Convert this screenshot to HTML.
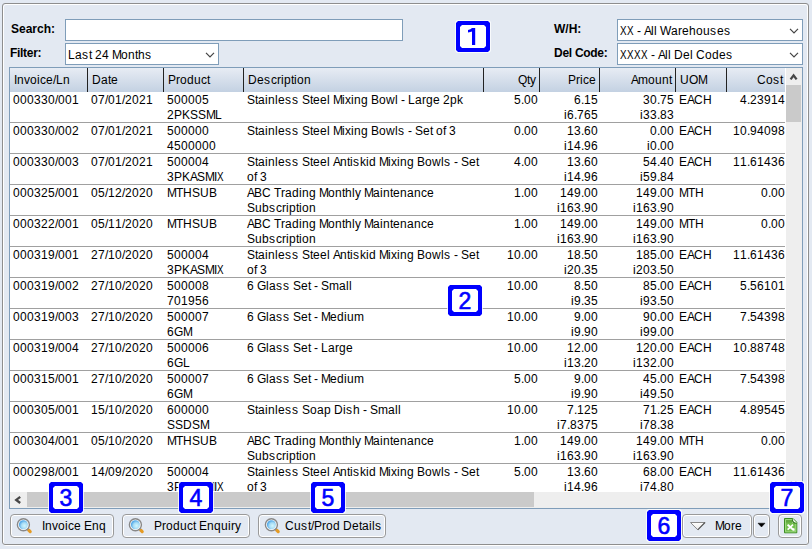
<!DOCTYPE html><html><head><meta charset="utf-8"><style>
*{margin:0;padding:0;box-sizing:border-box}
html,body{width:812px;height:549px;overflow:hidden;background:#e3e9f2;font-family:"Liberation Sans",sans-serif;font-size:12px;color:#000}
.a{position:absolute}
.t,.b{position:absolute;white-space:nowrap;line-height:15px}
.b{font-weight:bold}
.t i{display:inline-block;font-style:normal;white-space:pre}
.t i.X{transform:scaleX(0.82);transform-origin:0 0}
.w2{width:2px}.w3{width:3px}.w4{width:4px}.w5{width:5px}.w6{width:6px}.w7{width:7px}.w8{width:8px}.w9{width:9px}.w10{width:10px}.w11{width:11px}.w12{width:12px}
.inp{position:absolute;background:#fff;border:1px solid #7f9db9}
.chev{position:absolute;width:7px;height:7px;border-right:1px solid #444;border-bottom:1px solid #444;transform:rotate(45deg)}
.bo{position:absolute;width:36px;height:33px;background:rgba(255,255,255,0.75);clip-path:polygon(2px 0,34px 0,36px 2px,36px 31px,34px 33px,2px 33px,0 31px,0 2px)}
.badge{position:absolute;width:34px;height:31px;background:#00f;clip-path:polygon(2px 0,32px 0,34px 2px,34px 29px,32px 31px,2px 31px,0 29px,0 2px)}
.badge i{position:absolute;left:4px;top:4px;right:4px;bottom:4px;background:#fff;font-style:normal;color:#00f;font-weight:normal;-webkit-text-stroke:0.6px #00f;font-size:23px;line-height:25px;text-align:center;clip-path:polygon(2px 0,calc(100% - 2px) 0,100% 2px,100% calc(100% - 2px),calc(100% - 2px) 100%,2px 100%,0 calc(100% - 2px),0 2px)}
.btn{position:absolute;border:1px solid #9a9a9a;border-radius:4px;box-shadow:inset 0 0 0 1px #fff;background:#e3e9f2}
.hline{position:absolute;height:1px;background:#a0a0a0}
</style></head><body>

<div class="a" style="left:3px;top:4px;width:805px;height:542px;border:1px solid #fff;border-radius:3px"></div>
<div class="a" style="left:2px;top:3px;width:807px;height:542px;border:1px solid #8e8e8e;border-radius:3px"></div>
<div class="b" style="left:11px;top:22px">Search:</div>
<div class="inp" style="left:65px;top:19px;width:338px;height:22px"></div>
<div class="b" style="left:10px;top:46px;letter-spacing:-0.300px">Filter:</div>
<div class="inp" style="left:65px;top:43px;width:154px;height:22px"></div>
<div class="t" style="left:68px;top:48px"><i class="w7">L</i><i class="w7">a</i><i class="w7">s</i><i class="w3">t</i><i class="w3"> </i><i class="w7">2</i><i class="w7">4</i><i class="w3"> </i><i class="w9">M</i><i class="w7">o</i><i class="w7">n</i><i class="w3">t</i><i class="w7">h</i><i class="w7">s</i></div>
<svg class="a" style="left:205px;top:52px" width="10" height="6"><path d="M1 0.8 L5 4.8 L9 0.8" fill="none" stroke="#444" stroke-width="1.2"/></svg>
<div class="b" style="left:554px;top:22px">W/H:</div>
<div class="inp" style="left:617px;top:19px;width:186px;height:22px"></div>
<div class="t" style="left:620px;top:24px"><i class="w7 X">X</i><i class="w7 X">X</i><i class="w3"> </i><i class="w4">-</i><i class="w3"> </i><i class="w7">A</i><i class="w3">l</i><i class="w3">l</i><i class="w3"> </i><i class="w11">W</i><i class="w7">a</i><i class="w4">r</i><i class="w7">e</i><i class="w7">h</i><i class="w7">o</i><i class="w7">u</i><i class="w7">s</i><i class="w7">e</i><i class="w7">s</i></div>
<svg class="a" style="left:789px;top:28px" width="10" height="6"><path d="M1 0.8 L5 4.8 L9 0.8" fill="none" stroke="#444" stroke-width="1.2"/></svg>
<div class="b" style="left:554px;top:46px;letter-spacing:-0.280px">Del Code:</div>
<div class="inp" style="left:617px;top:43px;width:186px;height:22px"></div>
<div class="t" style="left:620px;top:48px"><i class="w7 X">X</i><i class="w7 X">X</i><i class="w7 X">X</i><i class="w7 X">X</i><i class="w3"> </i><i class="w4">-</i><i class="w3"> </i><i class="w7">A</i><i class="w3">l</i><i class="w3">l</i><i class="w3"> </i><i class="w9">D</i><i class="w7">e</i><i class="w3">l</i><i class="w3"> </i><i class="w9">C</i><i class="w7">o</i><i class="w7">d</i><i class="w7">e</i><i class="w7">s</i></div>
<svg class="a" style="left:789px;top:52px" width="10" height="6"><path d="M1 0.8 L5 4.8 L9 0.8" fill="none" stroke="#444" stroke-width="1.2"/></svg>
<div class="a" style="left:9px;top:67px;width:794px;height:442px;border:1px solid #7f9db9;background:#fff"></div>
<div class="a" style="left:10px;top:68px;width:775px;height:24px;background:linear-gradient(#e7ecf4,#c3d1e2)"></div>
<div class="t" style="left:14px;top:73px"><i class="w3">I</i><i class="w7">n</i><i class="w6">v</i><i class="w7">o</i><i class="w3">i</i><i class="w6">c</i><i class="w7">e</i><i class="w3">/</i><i class="w7">L</i><i class="w7">n</i></div>
<div class="a" style="left:87px;top:68px;width:1px;height:24px;background:#222"></div>
<div class="t" style="left:92px;top:73px"><i class="w9">D</i><i class="w7">a</i><i class="w3">t</i><i class="w7">e</i></div>
<div class="a" style="left:163px;top:68px;width:1px;height:24px;background:#222"></div>
<div class="t" style="left:168px;top:73px"><i class="w8">P</i><i class="w4">r</i><i class="w7">o</i><i class="w7">d</i><i class="w7">u</i><i class="w6">c</i><i class="w3">t</i></div>
<div class="a" style="left:243px;top:68px;width:1px;height:24px;background:#222"></div>
<div class="t" style="left:248px;top:73px"><i class="w9">D</i><i class="w7">e</i><i class="w7">s</i><i class="w6">c</i><i class="w4">r</i><i class="w3">i</i><i class="w7">p</i><i class="w3">t</i><i class="w3">i</i><i class="w7">o</i><i class="w7">n</i></div>
<div class="a" style="left:483px;top:68px;width:1px;height:24px;background:#222"></div>
<div class="t" style="left:518px;top:73px"><i class="w9">Q</i><i class="w3">t</i><i class="w6">y</i></div>
<div class="a" style="left:539px;top:68px;width:1px;height:24px;background:#222"></div>
<div class="t" style="left:568px;top:73px"><i class="w8">P</i><i class="w4">r</i><i class="w3">i</i><i class="w6">c</i><i class="w7">e</i></div>
<div class="a" style="left:599px;top:68px;width:1px;height:24px;background:#222"></div>
<div class="t" style="left:631px;top:73px"><i class="w7">A</i><i class="w10">m</i><i class="w7">o</i><i class="w7">u</i><i class="w7">n</i><i class="w3">t</i></div>
<div class="a" style="left:675px;top:68px;width:1px;height:24px;background:#222"></div>
<div class="t" style="left:680px;top:73px"><i class="w9">U</i><i class="w9">O</i><i class="w9">M</i></div>
<div class="a" style="left:726px;top:68px;width:1px;height:24px;background:#222"></div>
<div class="t" style="left:757px;top:73px"><i class="w9">C</i><i class="w7">o</i><i class="w7">s</i><i class="w3">t</i></div>
<div class="t" style="left:13px;top:93px"><i class="w7">0</i><i class="w7">0</i><i class="w7">0</i><i class="w7">3</i><i class="w7">3</i><i class="w7">0</i><i class="w3">/</i><i class="w7">0</i><i class="w7">0</i><i class="w7">1</i></div>
<div class="t" style="left:91px;top:93px"><i class="w7">0</i><i class="w7">7</i><i class="w3">/</i><i class="w7">0</i><i class="w7">1</i><i class="w3">/</i><i class="w7">2</i><i class="w7">0</i><i class="w7">2</i><i class="w7">1</i></div>
<div class="t" style="left:167px;top:93px"><i class="w7">5</i><i class="w7">0</i><i class="w7">0</i><i class="w7">0</i><i class="w7">0</i><i class="w7">5</i></div>
<div class="t" style="left:167px;top:108px"><i class="w7">2</i><i class="w8">P</i><i class="w8">K</i><i class="w8">S</i><i class="w8">S</i><i class="w9">M</i><i class="w7">L</i></div>
<div class="t" style="left:247px;top:93px"><i class="w8">S</i><i class="w3">t</i><i class="w7">a</i><i class="w3">i</i><i class="w7">n</i><i class="w3">l</i><i class="w7">e</i><i class="w7">s</i><i class="w7">s</i><i class="w3"> </i><i class="w8">S</i><i class="w3">t</i><i class="w7">e</i><i class="w7">e</i><i class="w3">l</i><i class="w3"> </i><i class="w9">M</i><i class="w3">i</i><i class="w6">x</i><i class="w3">i</i><i class="w7">n</i><i class="w7">g</i><i class="w3"> </i><i class="w8">B</i><i class="w7">o</i><i class="w9">w</i><i class="w3">l</i><i class="w3"> </i><i class="w4">-</i><i class="w3"> </i><i class="w7">L</i><i class="w7">a</i><i class="w4">r</i><i class="w7">g</i><i class="w7">e</i><i class="w3"> </i><i class="w7">2</i><i class="w7">p</i><i class="w6">k</i></div>
<div class="t" style="left:514px;top:93px"><i class="w7">5</i><i class="w3">.</i><i class="w7">0</i><i class="w7">0</i></div>
<div class="t" style="left:574px;top:93px"><i class="w7">6</i><i class="w3">.</i><i class="w7">1</i><i class="w7">5</i></div>
<div class="t" style="left:564px;top:108px"><i class="w3">i</i><i class="w7">6</i><i class="w3">.</i><i class="w7">7</i><i class="w7">6</i><i class="w7">5</i></div>
<div class="t" style="left:643px;top:93px"><i class="w7">3</i><i class="w7">0</i><i class="w3">.</i><i class="w7">7</i><i class="w7">5</i></div>
<div class="t" style="left:640px;top:108px"><i class="w3">i</i><i class="w7">3</i><i class="w7">3</i><i class="w3">.</i><i class="w7">8</i><i class="w7">3</i></div>
<div class="t" style="left:679px;top:93px"><i class="w8">E</i><i class="w7">A</i><i class="w9">C</i><i class="w9">H</i></div>
<div class="t" style="left:740px;top:93px"><i class="w7">4</i><i class="w3">.</i><i class="w7">2</i><i class="w7">3</i><i class="w7">9</i><i class="w7">1</i><i class="w7">4</i></div>
<div class="hline" style="left:10px;top:122px;width:775px"></div>
<div class="t" style="left:13px;top:124px"><i class="w7">0</i><i class="w7">0</i><i class="w7">0</i><i class="w7">3</i><i class="w7">3</i><i class="w7">0</i><i class="w3">/</i><i class="w7">0</i><i class="w7">0</i><i class="w7">2</i></div>
<div class="t" style="left:91px;top:124px"><i class="w7">0</i><i class="w7">7</i><i class="w3">/</i><i class="w7">0</i><i class="w7">1</i><i class="w3">/</i><i class="w7">2</i><i class="w7">0</i><i class="w7">2</i><i class="w7">1</i></div>
<div class="t" style="left:167px;top:124px"><i class="w7">5</i><i class="w7">0</i><i class="w7">0</i><i class="w7">0</i><i class="w7">0</i><i class="w7">0</i></div>
<div class="t" style="left:167px;top:139px"><i class="w7">4</i><i class="w7">5</i><i class="w7">0</i><i class="w7">0</i><i class="w7">0</i><i class="w7">0</i><i class="w7">0</i></div>
<div class="t" style="left:247px;top:124px"><i class="w8">S</i><i class="w3">t</i><i class="w7">a</i><i class="w3">i</i><i class="w7">n</i><i class="w3">l</i><i class="w7">e</i><i class="w7">s</i><i class="w7">s</i><i class="w3"> </i><i class="w8">S</i><i class="w3">t</i><i class="w7">e</i><i class="w7">e</i><i class="w3">l</i><i class="w3"> </i><i class="w9">M</i><i class="w3">i</i><i class="w6">x</i><i class="w3">i</i><i class="w7">n</i><i class="w7">g</i><i class="w3"> </i><i class="w8">B</i><i class="w7">o</i><i class="w9">w</i><i class="w3">l</i><i class="w7">s</i><i class="w3"> </i><i class="w4">-</i><i class="w3"> </i><i class="w8">S</i><i class="w7">e</i><i class="w3">t</i><i class="w3"> </i><i class="w7">o</i><i class="w3">f</i><i class="w3"> </i><i class="w7">3</i></div>
<div class="t" style="left:514px;top:124px"><i class="w7">0</i><i class="w3">.</i><i class="w7">0</i><i class="w7">0</i></div>
<div class="t" style="left:567px;top:124px"><i class="w7">1</i><i class="w7">3</i><i class="w3">.</i><i class="w7">6</i><i class="w7">0</i></div>
<div class="t" style="left:564px;top:139px"><i class="w3">i</i><i class="w7">1</i><i class="w7">4</i><i class="w3">.</i><i class="w7">9</i><i class="w7">6</i></div>
<div class="t" style="left:650px;top:124px"><i class="w7">0</i><i class="w3">.</i><i class="w7">0</i><i class="w7">0</i></div>
<div class="t" style="left:647px;top:139px"><i class="w3">i</i><i class="w7">0</i><i class="w3">.</i><i class="w7">0</i><i class="w7">0</i></div>
<div class="t" style="left:679px;top:124px"><i class="w8">E</i><i class="w7">A</i><i class="w9">C</i><i class="w9">H</i></div>
<div class="t" style="left:733px;top:124px"><i class="w7">1</i><i class="w7">0</i><i class="w3">.</i><i class="w7">9</i><i class="w7">4</i><i class="w7">0</i><i class="w7">9</i><i class="w7">8</i></div>
<div class="hline" style="left:10px;top:153px;width:775px"></div>
<div class="t" style="left:13px;top:155px"><i class="w7">0</i><i class="w7">0</i><i class="w7">0</i><i class="w7">3</i><i class="w7">3</i><i class="w7">0</i><i class="w3">/</i><i class="w7">0</i><i class="w7">0</i><i class="w7">3</i></div>
<div class="t" style="left:91px;top:155px"><i class="w7">0</i><i class="w7">7</i><i class="w3">/</i><i class="w7">0</i><i class="w7">1</i><i class="w3">/</i><i class="w7">2</i><i class="w7">0</i><i class="w7">2</i><i class="w7">1</i></div>
<div class="t" style="left:167px;top:155px"><i class="w7">5</i><i class="w7">0</i><i class="w7">0</i><i class="w7">0</i><i class="w7">0</i><i class="w7">4</i></div>
<div class="t" style="left:167px;top:170px"><i class="w7">3</i><i class="w8">P</i><i class="w8">K</i><i class="w7">A</i><i class="w8">S</i><i class="w9">M</i><i class="w3">I</i><i class="w7 X">X</i></div>
<div class="t" style="left:247px;top:155px"><i class="w8">S</i><i class="w3">t</i><i class="w7">a</i><i class="w3">i</i><i class="w7">n</i><i class="w3">l</i><i class="w7">e</i><i class="w7">s</i><i class="w7">s</i><i class="w3"> </i><i class="w8">S</i><i class="w3">t</i><i class="w7">e</i><i class="w7">e</i><i class="w3">l</i><i class="w3"> </i><i class="w7">A</i><i class="w7">n</i><i class="w3">t</i><i class="w3">i</i><i class="w7">s</i><i class="w6">k</i><i class="w3">i</i><i class="w7">d</i><i class="w3"> </i><i class="w9">M</i><i class="w3">i</i><i class="w6">x</i><i class="w3">i</i><i class="w7">n</i><i class="w7">g</i><i class="w3"> </i><i class="w8">B</i><i class="w7">o</i><i class="w9">w</i><i class="w3">l</i><i class="w7">s</i><i class="w3"> </i><i class="w4">-</i><i class="w3"> </i><i class="w8">S</i><i class="w7">e</i><i class="w3">t</i></div>
<div class="t" style="left:247px;top:170px"><i class="w7">o</i><i class="w3">f</i><i class="w3"> </i><i class="w7">3</i></div>
<div class="t" style="left:514px;top:155px"><i class="w7">4</i><i class="w3">.</i><i class="w7">0</i><i class="w7">0</i></div>
<div class="t" style="left:567px;top:155px"><i class="w7">1</i><i class="w7">3</i><i class="w3">.</i><i class="w7">6</i><i class="w7">0</i></div>
<div class="t" style="left:564px;top:170px"><i class="w3">i</i><i class="w7">1</i><i class="w7">4</i><i class="w3">.</i><i class="w7">9</i><i class="w7">6</i></div>
<div class="t" style="left:643px;top:155px"><i class="w7">5</i><i class="w7">4</i><i class="w3">.</i><i class="w7">4</i><i class="w7">0</i></div>
<div class="t" style="left:640px;top:170px"><i class="w3">i</i><i class="w7">5</i><i class="w7">9</i><i class="w3">.</i><i class="w7">8</i><i class="w7">4</i></div>
<div class="t" style="left:679px;top:155px"><i class="w8">E</i><i class="w7">A</i><i class="w9">C</i><i class="w9">H</i></div>
<div class="t" style="left:733px;top:155px"><i class="w7">1</i><i class="w7">1</i><i class="w3">.</i><i class="w7">6</i><i class="w7">1</i><i class="w7">4</i><i class="w7">3</i><i class="w7">6</i></div>
<div class="hline" style="left:10px;top:184px;width:775px"></div>
<div class="t" style="left:13px;top:186px"><i class="w7">0</i><i class="w7">0</i><i class="w7">0</i><i class="w7">3</i><i class="w7">2</i><i class="w7">5</i><i class="w3">/</i><i class="w7">0</i><i class="w7">0</i><i class="w7">1</i></div>
<div class="t" style="left:91px;top:186px"><i class="w7">0</i><i class="w7">5</i><i class="w3">/</i><i class="w7">1</i><i class="w7">2</i><i class="w3">/</i><i class="w7">2</i><i class="w7">0</i><i class="w7">2</i><i class="w7">0</i></div>
<div class="t" style="left:167px;top:186px"><i class="w9">M</i><i class="w7">T</i><i class="w9">H</i><i class="w8">S</i><i class="w9">U</i><i class="w8">B</i></div>
<div class="t" style="left:247px;top:186px"><i class="w7">A</i><i class="w8">B</i><i class="w9">C</i><i class="w3"> </i><i class="w7">T</i><i class="w4">r</i><i class="w7">a</i><i class="w7">d</i><i class="w3">i</i><i class="w7">n</i><i class="w7">g</i><i class="w3"> </i><i class="w9">M</i><i class="w7">o</i><i class="w7">n</i><i class="w3">t</i><i class="w7">h</i><i class="w3">l</i><i class="w6">y</i><i class="w3"> </i><i class="w9">M</i><i class="w7">a</i><i class="w3">i</i><i class="w7">n</i><i class="w3">t</i><i class="w7">e</i><i class="w7">n</i><i class="w7">a</i><i class="w7">n</i><i class="w6">c</i><i class="w7">e</i></div>
<div class="t" style="left:247px;top:201px"><i class="w8">S</i><i class="w7">u</i><i class="w7">b</i><i class="w7">s</i><i class="w6">c</i><i class="w4">r</i><i class="w3">i</i><i class="w7">p</i><i class="w3">t</i><i class="w3">i</i><i class="w7">o</i><i class="w7">n</i></div>
<div class="t" style="left:514px;top:186px"><i class="w7">1</i><i class="w3">.</i><i class="w7">0</i><i class="w7">0</i></div>
<div class="t" style="left:560px;top:186px"><i class="w7">1</i><i class="w7">4</i><i class="w7">9</i><i class="w3">.</i><i class="w7">0</i><i class="w7">0</i></div>
<div class="t" style="left:557px;top:201px"><i class="w3">i</i><i class="w7">1</i><i class="w7">6</i><i class="w7">3</i><i class="w3">.</i><i class="w7">9</i><i class="w7">0</i></div>
<div class="t" style="left:636px;top:186px"><i class="w7">1</i><i class="w7">4</i><i class="w7">9</i><i class="w3">.</i><i class="w7">0</i><i class="w7">0</i></div>
<div class="t" style="left:633px;top:201px"><i class="w3">i</i><i class="w7">1</i><i class="w7">6</i><i class="w7">3</i><i class="w3">.</i><i class="w7">9</i><i class="w7">0</i></div>
<div class="t" style="left:679px;top:186px"><i class="w9">M</i><i class="w7">T</i><i class="w9">H</i></div>
<div class="t" style="left:761px;top:186px"><i class="w7">0</i><i class="w3">.</i><i class="w7">0</i><i class="w7">0</i></div>
<div class="hline" style="left:10px;top:215px;width:775px"></div>
<div class="t" style="left:13px;top:217px"><i class="w7">0</i><i class="w7">0</i><i class="w7">0</i><i class="w7">3</i><i class="w7">2</i><i class="w7">2</i><i class="w3">/</i><i class="w7">0</i><i class="w7">0</i><i class="w7">1</i></div>
<div class="t" style="left:91px;top:217px"><i class="w7">0</i><i class="w7">5</i><i class="w3">/</i><i class="w7">1</i><i class="w7">1</i><i class="w3">/</i><i class="w7">2</i><i class="w7">0</i><i class="w7">2</i><i class="w7">0</i></div>
<div class="t" style="left:167px;top:217px"><i class="w9">M</i><i class="w7">T</i><i class="w9">H</i><i class="w8">S</i><i class="w9">U</i><i class="w8">B</i></div>
<div class="t" style="left:247px;top:217px"><i class="w7">A</i><i class="w8">B</i><i class="w9">C</i><i class="w3"> </i><i class="w7">T</i><i class="w4">r</i><i class="w7">a</i><i class="w7">d</i><i class="w3">i</i><i class="w7">n</i><i class="w7">g</i><i class="w3"> </i><i class="w9">M</i><i class="w7">o</i><i class="w7">n</i><i class="w3">t</i><i class="w7">h</i><i class="w3">l</i><i class="w6">y</i><i class="w3"> </i><i class="w9">M</i><i class="w7">a</i><i class="w3">i</i><i class="w7">n</i><i class="w3">t</i><i class="w7">e</i><i class="w7">n</i><i class="w7">a</i><i class="w7">n</i><i class="w6">c</i><i class="w7">e</i></div>
<div class="t" style="left:247px;top:232px"><i class="w8">S</i><i class="w7">u</i><i class="w7">b</i><i class="w7">s</i><i class="w6">c</i><i class="w4">r</i><i class="w3">i</i><i class="w7">p</i><i class="w3">t</i><i class="w3">i</i><i class="w7">o</i><i class="w7">n</i></div>
<div class="t" style="left:514px;top:217px"><i class="w7">1</i><i class="w3">.</i><i class="w7">0</i><i class="w7">0</i></div>
<div class="t" style="left:560px;top:217px"><i class="w7">1</i><i class="w7">4</i><i class="w7">9</i><i class="w3">.</i><i class="w7">0</i><i class="w7">0</i></div>
<div class="t" style="left:557px;top:232px"><i class="w3">i</i><i class="w7">1</i><i class="w7">6</i><i class="w7">3</i><i class="w3">.</i><i class="w7">9</i><i class="w7">0</i></div>
<div class="t" style="left:636px;top:217px"><i class="w7">1</i><i class="w7">4</i><i class="w7">9</i><i class="w3">.</i><i class="w7">0</i><i class="w7">0</i></div>
<div class="t" style="left:633px;top:232px"><i class="w3">i</i><i class="w7">1</i><i class="w7">6</i><i class="w7">3</i><i class="w3">.</i><i class="w7">9</i><i class="w7">0</i></div>
<div class="t" style="left:679px;top:217px"><i class="w9">M</i><i class="w7">T</i><i class="w9">H</i></div>
<div class="t" style="left:761px;top:217px"><i class="w7">0</i><i class="w3">.</i><i class="w7">0</i><i class="w7">0</i></div>
<div class="hline" style="left:10px;top:246px;width:775px"></div>
<div class="t" style="left:13px;top:248px"><i class="w7">0</i><i class="w7">0</i><i class="w7">0</i><i class="w7">3</i><i class="w7">1</i><i class="w7">9</i><i class="w3">/</i><i class="w7">0</i><i class="w7">0</i><i class="w7">1</i></div>
<div class="t" style="left:91px;top:248px"><i class="w7">2</i><i class="w7">7</i><i class="w3">/</i><i class="w7">1</i><i class="w7">0</i><i class="w3">/</i><i class="w7">2</i><i class="w7">0</i><i class="w7">2</i><i class="w7">0</i></div>
<div class="t" style="left:167px;top:248px"><i class="w7">5</i><i class="w7">0</i><i class="w7">0</i><i class="w7">0</i><i class="w7">0</i><i class="w7">4</i></div>
<div class="t" style="left:167px;top:263px"><i class="w7">3</i><i class="w8">P</i><i class="w8">K</i><i class="w7">A</i><i class="w8">S</i><i class="w9">M</i><i class="w3">I</i><i class="w7 X">X</i></div>
<div class="t" style="left:247px;top:248px"><i class="w8">S</i><i class="w3">t</i><i class="w7">a</i><i class="w3">i</i><i class="w7">n</i><i class="w3">l</i><i class="w7">e</i><i class="w7">s</i><i class="w7">s</i><i class="w3"> </i><i class="w8">S</i><i class="w3">t</i><i class="w7">e</i><i class="w7">e</i><i class="w3">l</i><i class="w3"> </i><i class="w7">A</i><i class="w7">n</i><i class="w3">t</i><i class="w3">i</i><i class="w7">s</i><i class="w6">k</i><i class="w3">i</i><i class="w7">d</i><i class="w3"> </i><i class="w9">M</i><i class="w3">i</i><i class="w6">x</i><i class="w3">i</i><i class="w7">n</i><i class="w7">g</i><i class="w3"> </i><i class="w8">B</i><i class="w7">o</i><i class="w9">w</i><i class="w3">l</i><i class="w7">s</i><i class="w3"> </i><i class="w4">-</i><i class="w3"> </i><i class="w8">S</i><i class="w7">e</i><i class="w3">t</i></div>
<div class="t" style="left:247px;top:263px"><i class="w7">o</i><i class="w3">f</i><i class="w3"> </i><i class="w7">3</i></div>
<div class="t" style="left:507px;top:248px"><i class="w7">1</i><i class="w7">0</i><i class="w3">.</i><i class="w7">0</i><i class="w7">0</i></div>
<div class="t" style="left:567px;top:248px"><i class="w7">1</i><i class="w7">8</i><i class="w3">.</i><i class="w7">5</i><i class="w7">0</i></div>
<div class="t" style="left:564px;top:263px"><i class="w3">i</i><i class="w7">2</i><i class="w7">0</i><i class="w3">.</i><i class="w7">3</i><i class="w7">5</i></div>
<div class="t" style="left:636px;top:248px"><i class="w7">1</i><i class="w7">8</i><i class="w7">5</i><i class="w3">.</i><i class="w7">0</i><i class="w7">0</i></div>
<div class="t" style="left:633px;top:263px"><i class="w3">i</i><i class="w7">2</i><i class="w7">0</i><i class="w7">3</i><i class="w3">.</i><i class="w7">5</i><i class="w7">0</i></div>
<div class="t" style="left:679px;top:248px"><i class="w8">E</i><i class="w7">A</i><i class="w9">C</i><i class="w9">H</i></div>
<div class="t" style="left:733px;top:248px"><i class="w7">1</i><i class="w7">1</i><i class="w3">.</i><i class="w7">6</i><i class="w7">1</i><i class="w7">4</i><i class="w7">3</i><i class="w7">6</i></div>
<div class="hline" style="left:10px;top:277px;width:775px"></div>
<div class="t" style="left:13px;top:279px"><i class="w7">0</i><i class="w7">0</i><i class="w7">0</i><i class="w7">3</i><i class="w7">1</i><i class="w7">9</i><i class="w3">/</i><i class="w7">0</i><i class="w7">0</i><i class="w7">2</i></div>
<div class="t" style="left:91px;top:279px"><i class="w7">2</i><i class="w7">7</i><i class="w3">/</i><i class="w7">1</i><i class="w7">0</i><i class="w3">/</i><i class="w7">2</i><i class="w7">0</i><i class="w7">2</i><i class="w7">0</i></div>
<div class="t" style="left:167px;top:279px"><i class="w7">5</i><i class="w7">0</i><i class="w7">0</i><i class="w7">0</i><i class="w7">0</i><i class="w7">8</i></div>
<div class="t" style="left:167px;top:294px"><i class="w7">7</i><i class="w7">0</i><i class="w7">1</i><i class="w7">9</i><i class="w7">5</i><i class="w7">6</i></div>
<div class="t" style="left:247px;top:279px"><i class="w7">6</i><i class="w3"> </i><i class="w9">G</i><i class="w3">l</i><i class="w7">a</i><i class="w7">s</i><i class="w7">s</i><i class="w3"> </i><i class="w8">S</i><i class="w7">e</i><i class="w3">t</i><i class="w3"> </i><i class="w4">-</i><i class="w3"> </i><i class="w8">S</i><i class="w10">m</i><i class="w7">a</i><i class="w3">l</i><i class="w3">l</i></div>
<div class="t" style="left:507px;top:279px"><i class="w7">1</i><i class="w7">0</i><i class="w3">.</i><i class="w7">0</i><i class="w7">0</i></div>
<div class="t" style="left:574px;top:279px"><i class="w7">8</i><i class="w3">.</i><i class="w7">5</i><i class="w7">0</i></div>
<div class="t" style="left:571px;top:294px"><i class="w3">i</i><i class="w7">9</i><i class="w3">.</i><i class="w7">3</i><i class="w7">5</i></div>
<div class="t" style="left:643px;top:279px"><i class="w7">8</i><i class="w7">5</i><i class="w3">.</i><i class="w7">0</i><i class="w7">0</i></div>
<div class="t" style="left:640px;top:294px"><i class="w3">i</i><i class="w7">9</i><i class="w7">3</i><i class="w3">.</i><i class="w7">5</i><i class="w7">0</i></div>
<div class="t" style="left:679px;top:279px"><i class="w8">E</i><i class="w7">A</i><i class="w9">C</i><i class="w9">H</i></div>
<div class="t" style="left:740px;top:279px"><i class="w7">5</i><i class="w3">.</i><i class="w7">5</i><i class="w7">6</i><i class="w7">1</i><i class="w7">0</i><i class="w7">1</i></div>
<div class="hline" style="left:10px;top:308px;width:775px"></div>
<div class="t" style="left:13px;top:310px"><i class="w7">0</i><i class="w7">0</i><i class="w7">0</i><i class="w7">3</i><i class="w7">1</i><i class="w7">9</i><i class="w3">/</i><i class="w7">0</i><i class="w7">0</i><i class="w7">3</i></div>
<div class="t" style="left:91px;top:310px"><i class="w7">2</i><i class="w7">7</i><i class="w3">/</i><i class="w7">1</i><i class="w7">0</i><i class="w3">/</i><i class="w7">2</i><i class="w7">0</i><i class="w7">2</i><i class="w7">0</i></div>
<div class="t" style="left:167px;top:310px"><i class="w7">5</i><i class="w7">0</i><i class="w7">0</i><i class="w7">0</i><i class="w7">0</i><i class="w7">7</i></div>
<div class="t" style="left:167px;top:325px"><i class="w7">6</i><i class="w9">G</i><i class="w9">M</i></div>
<div class="t" style="left:247px;top:310px"><i class="w7">6</i><i class="w3"> </i><i class="w9">G</i><i class="w3">l</i><i class="w7">a</i><i class="w7">s</i><i class="w7">s</i><i class="w3"> </i><i class="w8">S</i><i class="w7">e</i><i class="w3">t</i><i class="w3"> </i><i class="w4">-</i><i class="w3"> </i><i class="w9">M</i><i class="w7">e</i><i class="w7">d</i><i class="w3">i</i><i class="w7">u</i><i class="w10">m</i></div>
<div class="t" style="left:507px;top:310px"><i class="w7">1</i><i class="w7">0</i><i class="w3">.</i><i class="w7">0</i><i class="w7">0</i></div>
<div class="t" style="left:574px;top:310px"><i class="w7">9</i><i class="w3">.</i><i class="w7">0</i><i class="w7">0</i></div>
<div class="t" style="left:571px;top:325px"><i class="w3">i</i><i class="w7">9</i><i class="w3">.</i><i class="w7">9</i><i class="w7">0</i></div>
<div class="t" style="left:643px;top:310px"><i class="w7">9</i><i class="w7">0</i><i class="w3">.</i><i class="w7">0</i><i class="w7">0</i></div>
<div class="t" style="left:640px;top:325px"><i class="w3">i</i><i class="w7">9</i><i class="w7">9</i><i class="w3">.</i><i class="w7">0</i><i class="w7">0</i></div>
<div class="t" style="left:679px;top:310px"><i class="w8">E</i><i class="w7">A</i><i class="w9">C</i><i class="w9">H</i></div>
<div class="t" style="left:740px;top:310px"><i class="w7">7</i><i class="w3">.</i><i class="w7">5</i><i class="w7">4</i><i class="w7">3</i><i class="w7">9</i><i class="w7">8</i></div>
<div class="hline" style="left:10px;top:339px;width:775px"></div>
<div class="t" style="left:13px;top:341px"><i class="w7">0</i><i class="w7">0</i><i class="w7">0</i><i class="w7">3</i><i class="w7">1</i><i class="w7">9</i><i class="w3">/</i><i class="w7">0</i><i class="w7">0</i><i class="w7">4</i></div>
<div class="t" style="left:91px;top:341px"><i class="w7">2</i><i class="w7">7</i><i class="w3">/</i><i class="w7">1</i><i class="w7">0</i><i class="w3">/</i><i class="w7">2</i><i class="w7">0</i><i class="w7">2</i><i class="w7">0</i></div>
<div class="t" style="left:167px;top:341px"><i class="w7">5</i><i class="w7">0</i><i class="w7">0</i><i class="w7">0</i><i class="w7">0</i><i class="w7">6</i></div>
<div class="t" style="left:167px;top:356px"><i class="w7">6</i><i class="w9">G</i><i class="w7">L</i></div>
<div class="t" style="left:247px;top:341px"><i class="w7">6</i><i class="w3"> </i><i class="w9">G</i><i class="w3">l</i><i class="w7">a</i><i class="w7">s</i><i class="w7">s</i><i class="w3"> </i><i class="w8">S</i><i class="w7">e</i><i class="w3">t</i><i class="w3"> </i><i class="w4">-</i><i class="w3"> </i><i class="w7">L</i><i class="w7">a</i><i class="w4">r</i><i class="w7">g</i><i class="w7">e</i></div>
<div class="t" style="left:507px;top:341px"><i class="w7">1</i><i class="w7">0</i><i class="w3">.</i><i class="w7">0</i><i class="w7">0</i></div>
<div class="t" style="left:567px;top:341px"><i class="w7">1</i><i class="w7">2</i><i class="w3">.</i><i class="w7">0</i><i class="w7">0</i></div>
<div class="t" style="left:564px;top:356px"><i class="w3">i</i><i class="w7">1</i><i class="w7">3</i><i class="w3">.</i><i class="w7">2</i><i class="w7">0</i></div>
<div class="t" style="left:636px;top:341px"><i class="w7">1</i><i class="w7">2</i><i class="w7">0</i><i class="w3">.</i><i class="w7">0</i><i class="w7">0</i></div>
<div class="t" style="left:633px;top:356px"><i class="w3">i</i><i class="w7">1</i><i class="w7">3</i><i class="w7">2</i><i class="w3">.</i><i class="w7">0</i><i class="w7">0</i></div>
<div class="t" style="left:679px;top:341px"><i class="w8">E</i><i class="w7">A</i><i class="w9">C</i><i class="w9">H</i></div>
<div class="t" style="left:733px;top:341px"><i class="w7">1</i><i class="w7">0</i><i class="w3">.</i><i class="w7">8</i><i class="w7">8</i><i class="w7">7</i><i class="w7">4</i><i class="w7">8</i></div>
<div class="hline" style="left:10px;top:370px;width:775px"></div>
<div class="t" style="left:13px;top:372px"><i class="w7">0</i><i class="w7">0</i><i class="w7">0</i><i class="w7">3</i><i class="w7">1</i><i class="w7">5</i><i class="w3">/</i><i class="w7">0</i><i class="w7">0</i><i class="w7">1</i></div>
<div class="t" style="left:91px;top:372px"><i class="w7">2</i><i class="w7">7</i><i class="w3">/</i><i class="w7">1</i><i class="w7">0</i><i class="w3">/</i><i class="w7">2</i><i class="w7">0</i><i class="w7">2</i><i class="w7">0</i></div>
<div class="t" style="left:167px;top:372px"><i class="w7">5</i><i class="w7">0</i><i class="w7">0</i><i class="w7">0</i><i class="w7">0</i><i class="w7">7</i></div>
<div class="t" style="left:167px;top:387px"><i class="w7">6</i><i class="w9">G</i><i class="w9">M</i></div>
<div class="t" style="left:247px;top:372px"><i class="w7">6</i><i class="w3"> </i><i class="w9">G</i><i class="w3">l</i><i class="w7">a</i><i class="w7">s</i><i class="w7">s</i><i class="w3"> </i><i class="w8">S</i><i class="w7">e</i><i class="w3">t</i><i class="w3"> </i><i class="w4">-</i><i class="w3"> </i><i class="w9">M</i><i class="w7">e</i><i class="w7">d</i><i class="w3">i</i><i class="w7">u</i><i class="w10">m</i></div>
<div class="t" style="left:514px;top:372px"><i class="w7">5</i><i class="w3">.</i><i class="w7">0</i><i class="w7">0</i></div>
<div class="t" style="left:574px;top:372px"><i class="w7">9</i><i class="w3">.</i><i class="w7">0</i><i class="w7">0</i></div>
<div class="t" style="left:571px;top:387px"><i class="w3">i</i><i class="w7">9</i><i class="w3">.</i><i class="w7">9</i><i class="w7">0</i></div>
<div class="t" style="left:643px;top:372px"><i class="w7">4</i><i class="w7">5</i><i class="w3">.</i><i class="w7">0</i><i class="w7">0</i></div>
<div class="t" style="left:640px;top:387px"><i class="w3">i</i><i class="w7">4</i><i class="w7">9</i><i class="w3">.</i><i class="w7">5</i><i class="w7">0</i></div>
<div class="t" style="left:679px;top:372px"><i class="w8">E</i><i class="w7">A</i><i class="w9">C</i><i class="w9">H</i></div>
<div class="t" style="left:740px;top:372px"><i class="w7">7</i><i class="w3">.</i><i class="w7">5</i><i class="w7">4</i><i class="w7">3</i><i class="w7">9</i><i class="w7">8</i></div>
<div class="hline" style="left:10px;top:401px;width:775px"></div>
<div class="t" style="left:13px;top:403px"><i class="w7">0</i><i class="w7">0</i><i class="w7">0</i><i class="w7">3</i><i class="w7">0</i><i class="w7">5</i><i class="w3">/</i><i class="w7">0</i><i class="w7">0</i><i class="w7">1</i></div>
<div class="t" style="left:91px;top:403px"><i class="w7">1</i><i class="w7">5</i><i class="w3">/</i><i class="w7">1</i><i class="w7">0</i><i class="w3">/</i><i class="w7">2</i><i class="w7">0</i><i class="w7">2</i><i class="w7">0</i></div>
<div class="t" style="left:167px;top:403px"><i class="w7">6</i><i class="w7">0</i><i class="w7">0</i><i class="w7">0</i><i class="w7">0</i><i class="w7">0</i></div>
<div class="t" style="left:167px;top:418px"><i class="w8">S</i><i class="w8">S</i><i class="w9">D</i><i class="w8">S</i><i class="w9">M</i></div>
<div class="t" style="left:247px;top:403px"><i class="w8">S</i><i class="w3">t</i><i class="w7">a</i><i class="w3">i</i><i class="w7">n</i><i class="w3">l</i><i class="w7">e</i><i class="w7">s</i><i class="w7">s</i><i class="w3"> </i><i class="w8">S</i><i class="w7">o</i><i class="w7">a</i><i class="w7">p</i><i class="w3"> </i><i class="w9">D</i><i class="w3">i</i><i class="w7">s</i><i class="w7">h</i><i class="w3"> </i><i class="w4">-</i><i class="w3"> </i><i class="w8">S</i><i class="w10">m</i><i class="w7">a</i><i class="w3">l</i><i class="w3">l</i></div>
<div class="t" style="left:507px;top:403px"><i class="w7">1</i><i class="w7">0</i><i class="w3">.</i><i class="w7">0</i><i class="w7">0</i></div>
<div class="t" style="left:567px;top:403px"><i class="w7">7</i><i class="w3">.</i><i class="w7">1</i><i class="w7">2</i><i class="w7">5</i></div>
<div class="t" style="left:557px;top:418px"><i class="w3">i</i><i class="w7">7</i><i class="w3">.</i><i class="w7">8</i><i class="w7">3</i><i class="w7">7</i><i class="w7">5</i></div>
<div class="t" style="left:643px;top:403px"><i class="w7">7</i><i class="w7">1</i><i class="w3">.</i><i class="w7">2</i><i class="w7">5</i></div>
<div class="t" style="left:640px;top:418px"><i class="w3">i</i><i class="w7">7</i><i class="w7">8</i><i class="w3">.</i><i class="w7">3</i><i class="w7">8</i></div>
<div class="t" style="left:679px;top:403px"><i class="w8">E</i><i class="w7">A</i><i class="w9">C</i><i class="w9">H</i></div>
<div class="t" style="left:740px;top:403px"><i class="w7">4</i><i class="w3">.</i><i class="w7">8</i><i class="w7">9</i><i class="w7">5</i><i class="w7">4</i><i class="w7">5</i></div>
<div class="hline" style="left:10px;top:432px;width:775px"></div>
<div class="t" style="left:13px;top:434px"><i class="w7">0</i><i class="w7">0</i><i class="w7">0</i><i class="w7">3</i><i class="w7">0</i><i class="w7">4</i><i class="w3">/</i><i class="w7">0</i><i class="w7">0</i><i class="w7">1</i></div>
<div class="t" style="left:91px;top:434px"><i class="w7">0</i><i class="w7">5</i><i class="w3">/</i><i class="w7">1</i><i class="w7">0</i><i class="w3">/</i><i class="w7">2</i><i class="w7">0</i><i class="w7">2</i><i class="w7">0</i></div>
<div class="t" style="left:167px;top:434px"><i class="w9">M</i><i class="w7">T</i><i class="w9">H</i><i class="w8">S</i><i class="w9">U</i><i class="w8">B</i></div>
<div class="t" style="left:247px;top:434px"><i class="w7">A</i><i class="w8">B</i><i class="w9">C</i><i class="w3"> </i><i class="w7">T</i><i class="w4">r</i><i class="w7">a</i><i class="w7">d</i><i class="w3">i</i><i class="w7">n</i><i class="w7">g</i><i class="w3"> </i><i class="w9">M</i><i class="w7">o</i><i class="w7">n</i><i class="w3">t</i><i class="w7">h</i><i class="w3">l</i><i class="w6">y</i><i class="w3"> </i><i class="w9">M</i><i class="w7">a</i><i class="w3">i</i><i class="w7">n</i><i class="w3">t</i><i class="w7">e</i><i class="w7">n</i><i class="w7">a</i><i class="w7">n</i><i class="w6">c</i><i class="w7">e</i></div>
<div class="t" style="left:247px;top:449px"><i class="w8">S</i><i class="w7">u</i><i class="w7">b</i><i class="w7">s</i><i class="w6">c</i><i class="w4">r</i><i class="w3">i</i><i class="w7">p</i><i class="w3">t</i><i class="w3">i</i><i class="w7">o</i><i class="w7">n</i></div>
<div class="t" style="left:514px;top:434px"><i class="w7">1</i><i class="w3">.</i><i class="w7">0</i><i class="w7">0</i></div>
<div class="t" style="left:560px;top:434px"><i class="w7">1</i><i class="w7">4</i><i class="w7">9</i><i class="w3">.</i><i class="w7">0</i><i class="w7">0</i></div>
<div class="t" style="left:557px;top:449px"><i class="w3">i</i><i class="w7">1</i><i class="w7">6</i><i class="w7">3</i><i class="w3">.</i><i class="w7">9</i><i class="w7">0</i></div>
<div class="t" style="left:636px;top:434px"><i class="w7">1</i><i class="w7">4</i><i class="w7">9</i><i class="w3">.</i><i class="w7">0</i><i class="w7">0</i></div>
<div class="t" style="left:633px;top:449px"><i class="w3">i</i><i class="w7">1</i><i class="w7">6</i><i class="w7">3</i><i class="w3">.</i><i class="w7">9</i><i class="w7">0</i></div>
<div class="t" style="left:679px;top:434px"><i class="w9">M</i><i class="w7">T</i><i class="w9">H</i></div>
<div class="t" style="left:761px;top:434px"><i class="w7">0</i><i class="w3">.</i><i class="w7">0</i><i class="w7">0</i></div>
<div class="hline" style="left:10px;top:463px;width:775px"></div>
<div class="t" style="left:13px;top:465px"><i class="w7">0</i><i class="w7">0</i><i class="w7">0</i><i class="w7">2</i><i class="w7">9</i><i class="w7">8</i><i class="w3">/</i><i class="w7">0</i><i class="w7">0</i><i class="w7">1</i></div>
<div class="t" style="left:91px;top:465px"><i class="w7">1</i><i class="w7">4</i><i class="w3">/</i><i class="w7">0</i><i class="w7">9</i><i class="w3">/</i><i class="w7">2</i><i class="w7">0</i><i class="w7">2</i><i class="w7">0</i></div>
<div class="t" style="left:167px;top:465px"><i class="w7">5</i><i class="w7">0</i><i class="w7">0</i><i class="w7">0</i><i class="w7">0</i><i class="w7">4</i></div>
<div class="t" style="left:167px;top:480px"><i class="w7">3</i><i class="w8">P</i><i class="w8">K</i><i class="w7">A</i><i class="w8">S</i><i class="w9">M</i><i class="w3">I</i><i class="w7 X">X</i></div>
<div class="t" style="left:247px;top:465px"><i class="w8">S</i><i class="w3">t</i><i class="w7">a</i><i class="w3">i</i><i class="w7">n</i><i class="w3">l</i><i class="w7">e</i><i class="w7">s</i><i class="w7">s</i><i class="w3"> </i><i class="w8">S</i><i class="w3">t</i><i class="w7">e</i><i class="w7">e</i><i class="w3">l</i><i class="w3"> </i><i class="w7">A</i><i class="w7">n</i><i class="w3">t</i><i class="w3">i</i><i class="w7">s</i><i class="w6">k</i><i class="w3">i</i><i class="w7">d</i><i class="w3"> </i><i class="w9">M</i><i class="w3">i</i><i class="w6">x</i><i class="w3">i</i><i class="w7">n</i><i class="w7">g</i><i class="w3"> </i><i class="w8">B</i><i class="w7">o</i><i class="w9">w</i><i class="w3">l</i><i class="w7">s</i><i class="w3"> </i><i class="w4">-</i><i class="w3"> </i><i class="w8">S</i><i class="w7">e</i><i class="w3">t</i></div>
<div class="t" style="left:247px;top:480px"><i class="w7">o</i><i class="w3">f</i><i class="w3"> </i><i class="w7">3</i></div>
<div class="t" style="left:514px;top:465px"><i class="w7">5</i><i class="w3">.</i><i class="w7">0</i><i class="w7">0</i></div>
<div class="t" style="left:567px;top:465px"><i class="w7">1</i><i class="w7">3</i><i class="w3">.</i><i class="w7">6</i><i class="w7">0</i></div>
<div class="t" style="left:564px;top:480px"><i class="w3">i</i><i class="w7">1</i><i class="w7">4</i><i class="w3">.</i><i class="w7">9</i><i class="w7">6</i></div>
<div class="t" style="left:643px;top:465px"><i class="w7">6</i><i class="w7">8</i><i class="w3">.</i><i class="w7">0</i><i class="w7">0</i></div>
<div class="t" style="left:640px;top:480px"><i class="w3">i</i><i class="w7">7</i><i class="w7">4</i><i class="w3">.</i><i class="w7">8</i><i class="w7">0</i></div>
<div class="t" style="left:679px;top:465px"><i class="w8">E</i><i class="w7">A</i><i class="w9">C</i><i class="w9">H</i></div>
<div class="t" style="left:733px;top:465px"><i class="w7">1</i><i class="w7">1</i><i class="w3">.</i><i class="w7">6</i><i class="w7">1</i><i class="w7">4</i><i class="w7">3</i><i class="w7">6</i></div>
<div class="hline" style="left:10px;top:494px;width:775px"></div>
<div class="a" style="left:786px;top:68px;width:16px;height:424px;background:#eeeeee"></div>
<div class="a" style="left:786px;top:85px;width:15px;height:37px;background:#cacaca"></div>
<div class="a" style="left:10px;top:492px;width:792px;height:16px;background:#eeeeee"></div>
<div class="a" style="left:27px;top:492px;width:507px;height:15px;background:#cacaca"></div>
<div class="btn" style="left:10px;top:514px;width:104px;height:24px"></div>
<svg class="a" style="left:14px;top:514px" width="24" height="24" viewBox="0 0 24 24"><defs><radialGradient id="lg10" cx="0.62" cy="0.62" r="0.62"><stop offset="0" stop-color="#d2f6fd"/><stop offset="0.55" stop-color="#a6dcf6"/><stop offset="1" stop-color="#4aa3e6"/></radialGradient></defs><path d="M13.2 14.6 L15 16.4" stroke="#9a9ea4" stroke-width="2.8"/><path d="M15 16.4 L16.2 17.6" stroke="#e59b24" stroke-width="3.2" stroke-linecap="round"/><circle cx="9.4" cy="10.7" r="6" fill="#fdfdfd" stroke="#888" stroke-width="1.4"/><circle cx="9.4" cy="10.7" r="4.5" fill="url(#lg10)"/></svg>
<div class="t" style="left:42px;top:519px"><i class="w3">I</i><i class="w7">n</i><i class="w6">v</i><i class="w7">o</i><i class="w3">i</i><i class="w6">c</i><i class="w7">e</i><i class="w3"> </i><i class="w8">E</i><i class="w7">n</i><i class="w7">q</i></div>
<div class="btn" style="left:122px;top:514px;width:128px;height:24px"></div>
<svg class="a" style="left:126px;top:514px" width="24" height="24" viewBox="0 0 24 24"><defs><radialGradient id="lg122" cx="0.62" cy="0.62" r="0.62"><stop offset="0" stop-color="#d2f6fd"/><stop offset="0.55" stop-color="#a6dcf6"/><stop offset="1" stop-color="#4aa3e6"/></radialGradient></defs><path d="M13.2 14.6 L15 16.4" stroke="#9a9ea4" stroke-width="2.8"/><path d="M15 16.4 L16.2 17.6" stroke="#e59b24" stroke-width="3.2" stroke-linecap="round"/><circle cx="9.4" cy="10.7" r="6" fill="#fdfdfd" stroke="#888" stroke-width="1.4"/><circle cx="9.4" cy="10.7" r="4.5" fill="url(#lg122)"/></svg>
<div class="t" style="left:154px;top:519px"><i class="w8">P</i><i class="w4">r</i><i class="w7">o</i><i class="w7">d</i><i class="w7">u</i><i class="w6">c</i><i class="w3">t</i><i class="w3"> </i><i class="w8">E</i><i class="w7">n</i><i class="w7">q</i><i class="w7">u</i><i class="w3">i</i><i class="w4">r</i><i class="w6">y</i></div>
<div class="btn" style="left:258px;top:514px;width:128px;height:24px"></div>
<svg class="a" style="left:262px;top:514px" width="24" height="24" viewBox="0 0 24 24"><defs><radialGradient id="lg258" cx="0.62" cy="0.62" r="0.62"><stop offset="0" stop-color="#d2f6fd"/><stop offset="0.55" stop-color="#a6dcf6"/><stop offset="1" stop-color="#4aa3e6"/></radialGradient></defs><path d="M13.2 14.6 L15 16.4" stroke="#9a9ea4" stroke-width="2.8"/><path d="M15 16.4 L16.2 17.6" stroke="#e59b24" stroke-width="3.2" stroke-linecap="round"/><circle cx="9.4" cy="10.7" r="6" fill="#fdfdfd" stroke="#888" stroke-width="1.4"/><circle cx="9.4" cy="10.7" r="4.5" fill="url(#lg258)"/></svg>
<div class="t" style="left:285px;top:519px"><i class="w9">C</i><i class="w7">u</i><i class="w7">s</i><i class="w3">t</i><i class="w3">/</i><i class="w8">P</i><i class="w4">r</i><i class="w7">o</i><i class="w7">d</i><i class="w3"> </i><i class="w9">D</i><i class="w7">e</i><i class="w3">t</i><i class="w7">a</i><i class="w3">i</i><i class="w3">l</i><i class="w7">s</i></div>
<div class="btn" style="left:682px;top:514px;width:70px;height:24px"></div>
<svg class="a" style="left:689px;top:521px" width="18" height="10"><defs><linearGradient id="tg" x1="0" y1="0" x2="0" y2="1"><stop offset="0" stop-color="#ffffff"/><stop offset="1" stop-color="#e8e8e8"/></linearGradient></defs><path d="M1.5 1.5 L16 1.5 L8.75 8.8 Z" fill="url(#tg)" stroke="#8a8a8a" stroke-width="1" stroke-linejoin="round"/><path d="M16 1.5 L8.75 8.8" stroke="#5a5a5a" stroke-width="1.1"/></svg>
<div class="t" style="left:715px;top:519px"><i class="w9">M</i><i class="w7">o</i><i class="w4">r</i><i class="w7">e</i></div>
<div class="btn" style="left:753px;top:514px;width:17px;height:24px"></div>
<svg class="a" style="left:757px;top:522px" width="10" height="7"><path d="M1 1.2 L8 1.2 L4.5 5 Z" fill="#000" stroke="#000" stroke-width="0.5"/></svg>
<div class="btn" style="left:778px;top:514px;width:24px;height:24px"></div>
<svg class="a" style="left:783px;top:517px" width="16" height="18" viewBox="0 0 16 18"><path d="M1.5 1.5 L10 1.5 L13.8 5.3 L13.8 15.8 L1.5 15.8 Z" fill="#73be50" stroke="#3c8c25" stroke-width="1"/><path d="M2.5 2.5 L9.5 2.5 L12.8 5.8 L12.8 14.8 L2.5 14.8 Z" fill="none" stroke="#a2db82" stroke-width="0.9"/><rect x="3" y="3" width="6.5" height="2.6" fill="#62a842"/><path d="M9.6 1.6 L13.9 5.9 L9.6 5.9 Z" fill="#fff"/><path d="M9.4 2.2 Q9.4 6.2 13.6 6.2" fill="none" stroke="#2f7a1c" stroke-width="1.1"/><path d="M4.6 7.8 L10.8 13.2" stroke="#fff" stroke-width="1.9"/><path d="M10 7.6 L4.6 12.6" stroke="#fff" stroke-width="1.6"/><path d="M8.6 12.8 L11.8 13.8 L11.2 10.8 Z" fill="#fff"/></svg>
<svg class="a" style="left:14px;top:495px" width="9" height="10"><path d="M6.2 1.8 L2.2 4.9 L6.2 8" fill="none" stroke="#474747" stroke-width="2.3"/></svg>
<svg class="a" style="left:789px;top:73px" width="10" height="9"><path d="M1.6 6.4 L4.6 2.4 L7.6 6.4" fill="none" stroke="#474747" stroke-width="2.3"/></svg>
<svg class="a" style="left:789px;top:479px" width="10" height="9"><path d="M1.6 2.6 L4.6 6.6 L7.6 2.6" fill="none" stroke="#474747" stroke-width="2.3"/></svg>
<div class="bo" style="left:455px;top:20px"></div>
<div class="badge" style="left:456px;top:21px"><i></i></div>
<svg class="a" style="left:456px;top:21px" width="34" height="31"><path d="M16 7 L19.2 7 L19.2 24 L16 24 L16 10.6 Q14.5 11.3 12 11.4 L12 9.1 Q14.8 8.6 16 7 Z" fill="#00f"/></svg>
<div class="bo" style="left:447px;top:284px"></div>
<div class="badge" style="left:448px;top:285px"><i>2</i></div>
<div class="bo" style="left:48px;top:481px"></div>
<div class="badge" style="left:49px;top:482px"><i>3</i></div>
<div class="bo" style="left:178px;top:481px"></div>
<div class="badge" style="left:179px;top:482px"><i>4</i></div>
<div class="bo" style="left:310px;top:481px"></div>
<div class="badge" style="left:311px;top:482px"><i>5</i></div>
<div class="bo" style="left:646px;top:509px"></div>
<div class="badge" style="left:647px;top:510px"><i>6</i></div>
<div class="bo" style="left:769px;top:481px"></div>
<div class="badge" style="left:770px;top:482px"><i>7</i></div>
</body></html>
